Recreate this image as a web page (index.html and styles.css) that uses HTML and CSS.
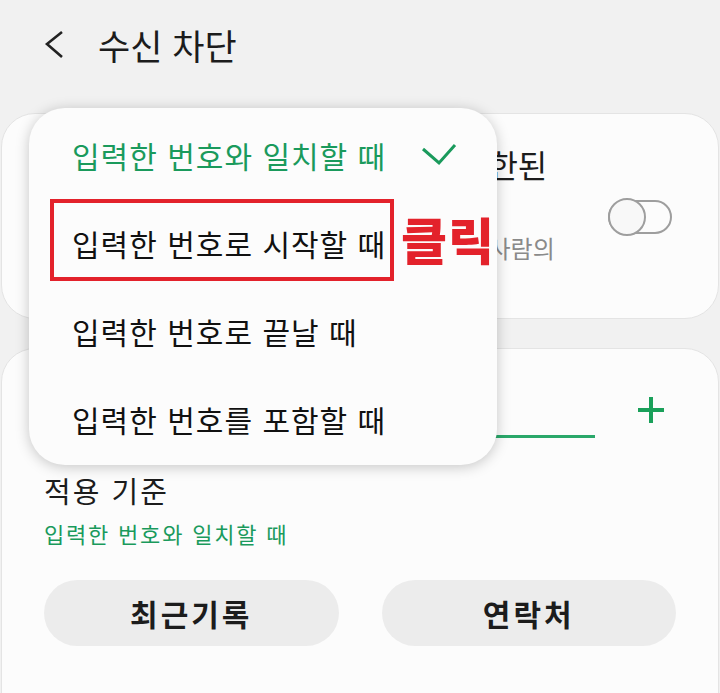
FILE: index.html
```html
<!DOCTYPE html>
<html lang="ko">
<head>
    <meta charset="UTF-8">
    <title>수신 차단</title>
    <link rel="stylesheet" href="styles.css">
</head>
<body>
<div class="page">
    <div class="top-bar">
        <svg class="back-icon" width="24" height="32" viewBox="0 0 24 32">
            <polyline points="18,3 3,15 18,28" fill="none" stroke="#222" stroke-width="2.6"/>
        </svg>
        <h1 class="top-title">수신 차단</h1>
    </div>

    <div class="card card-unknown">
        <div class="unknown-text">
            <div class="unknown-title">발신번호 정보가 없거나 표시가 제한된<br>번호 차단</div>
            <div class="unknown-desc">알 수 없는 번호나 발신번호 표시를 제한하는 사람의<br>전화를 차단합니다.</div>
        </div>
        <div class="switch"><span class="switch-thumb"></span></div>
    </div>

    <div class="card card-number">
        <div class="number-row">
            <div class="number-input"></div>
            <svg class="add-icon" width="28" height="28" viewBox="0 0 28 28">
                <path d="M14 1v26M1 14h26" stroke="#1aa05a" stroke-width="4"/>
            </svg>
        </div>
        <div class="rule-title">적용 기준</div>
        <div class="rule-value">입력한 번호와 일치할 때</div>
        <div class="btn-row">
            <a href="javascript:void(0);" class="pill-btn">최근기록</a>
            <a href="javascript:void(0);" class="pill-btn">연락처</a>
        </div>
    </div>

    <div class="menu">
        <div class="menu-item selected">
            입력한 번호와 일치할 때
            <svg class="check-icon" width="36" height="24" viewBox="0 0 36 24">
                <polyline points="2,6 18,20 34,2" fill="none" stroke="#1a9a5c" stroke-width="3"/>
            </svg>
        </div>
        <div class="menu-item">입력한 번호로 시작할 때</div>
        <div class="menu-item">입력한 번호로 끝날 때</div>
        <div class="menu-item">입력한 번호를 포함할 때</div>
        <div class="mark-box"></div>
        <div class="mark-text">클릭</div>
    </div>
</div>
</body>
</html>
```

FILE: styles.css
```css
html, body {
    margin: 0px;
    padding: 0px;
}
body {
    background: #f1f1f1;
    font-family: "Noto Sans CJK KR", "Noto Sans", sans-serif;
    color: #1c1c1c;
}
a {
    text-decoration: none;
    color: #1c1c1c;
}
.page {
    position: relative;
    width: 720px;
    height: 693px;
    overflow: hidden;
}
.top-bar {
    height: 90px;
    display: flex;
    align-items: center;
    padding-left: 44px;
}
.back-icon {
    display: block;
}
.top-title {
    margin: 0px 0px 0px 30px;
    font-size: 35px;
    font-weight: 400;
    line-height: 44px;
}
.card {
    background: #fcfcfc;
    border: 1px solid #e4e4e4;
    border-radius: 34px;
    margin: 0px 1px;
    box-sizing: border-box;
}
.card-unknown {
    margin-top: 23px;
    height: 206px;
    display: flex;
    align-items: flex-start;
    padding: 0px 46px 0px 42px;
    overflow: hidden;
}
.unknown-text {
    flex: 1;
    padding-top: 30px;
    min-width: 0;
}
.unknown-title {
    font-size: 32px;
    letter-spacing: -0.2px;
    line-height: 40px;
    white-space: nowrap;
}
.unknown-desc {
    margin-top: 7px;
    font-size: 24px;
    line-height: 34px;
    color: #8a8a8a;
    white-space: nowrap;
}
.switch {
    flex: none;
    margin-top: 86px;
    width: 64px;
    height: 34px;
    border: 2px solid #9e9e9e;
    border-radius: 17px;
    box-sizing: border-box;
    position: relative;
}
.switch-thumb {
    position: absolute;
    left: -2px;
    top: -4px;
    width: 38px;
    height: 38px;
    box-sizing: border-box;
    border: 2px solid #9e9e9e;
    border-radius: 50%;
    background: #f8f8f8;
}
.card-number {
    margin-top: 29px;
    height: 400px;
    padding: 47px 42px 0px 42px;
}
.number-row {
    display: flex;
    align-items: flex-start;
}
.number-input {
    width: 551px;
    height: 42px;
    box-sizing: border-box;
    border-bottom: 3px solid #2aa86a;
}
.add-icon {
    margin-left: 42px;
}
.rule-title {
    margin-top: 34px;
    font-size: 29px;
    letter-spacing: 2px;
    line-height: 36px;
}
.rule-value {
    margin-top: 10px;
    font-size: 22px;
    letter-spacing: 1.8px;
    line-height: 30px;
    color: #1a9a5c;
}
.btn-row {
    display: flex;
    gap: 43px;
    margin-top: 32px;
}
.pill-btn {
    flex: 1;
    height: 66px;
    border-radius: 33px;
    background: #ececec;
    display: flex;
    align-items: center;
    justify-content: center;
    font-size: 30px;
    letter-spacing: 3px;
    font-weight: 700;
}
/* 팝업 메뉴 */
.menu {
    position: absolute;
    left: 29px;
    top: 108px;
    width: 468px;
    height: 357px;
    box-sizing: border-box;
    padding-top: 3px;
    background: #fcfcfc;
    border-radius: 36px;
    box-shadow: 0px 2px 14px rgba(0, 0, 0, 0.22);
}
.menu-item {
    height: 88px;
    display: flex;
    align-items: center;
    padding-left: 43px;
    font-size: 30px;
    letter-spacing: 1px;
    color: #111;
}
.menu-item.selected {
    color: #1a9a5c;
}
.check-icon {
    margin-left: auto;
    margin-right: 40px;
}
.mark-box {
    position: absolute;
    left: 21px;
    top: 91px;
    width: 344px;
    height: 82px;
    box-sizing: border-box;
    border: 4px solid #e3222b;
}
.mark-text {
    position: absolute;
    left: 372px;
    top: 100px;
    font-size: 50px;
    font-weight: 900;
    letter-spacing: 1px;
    line-height: 60px;
    color: #e3222b;
}
```
